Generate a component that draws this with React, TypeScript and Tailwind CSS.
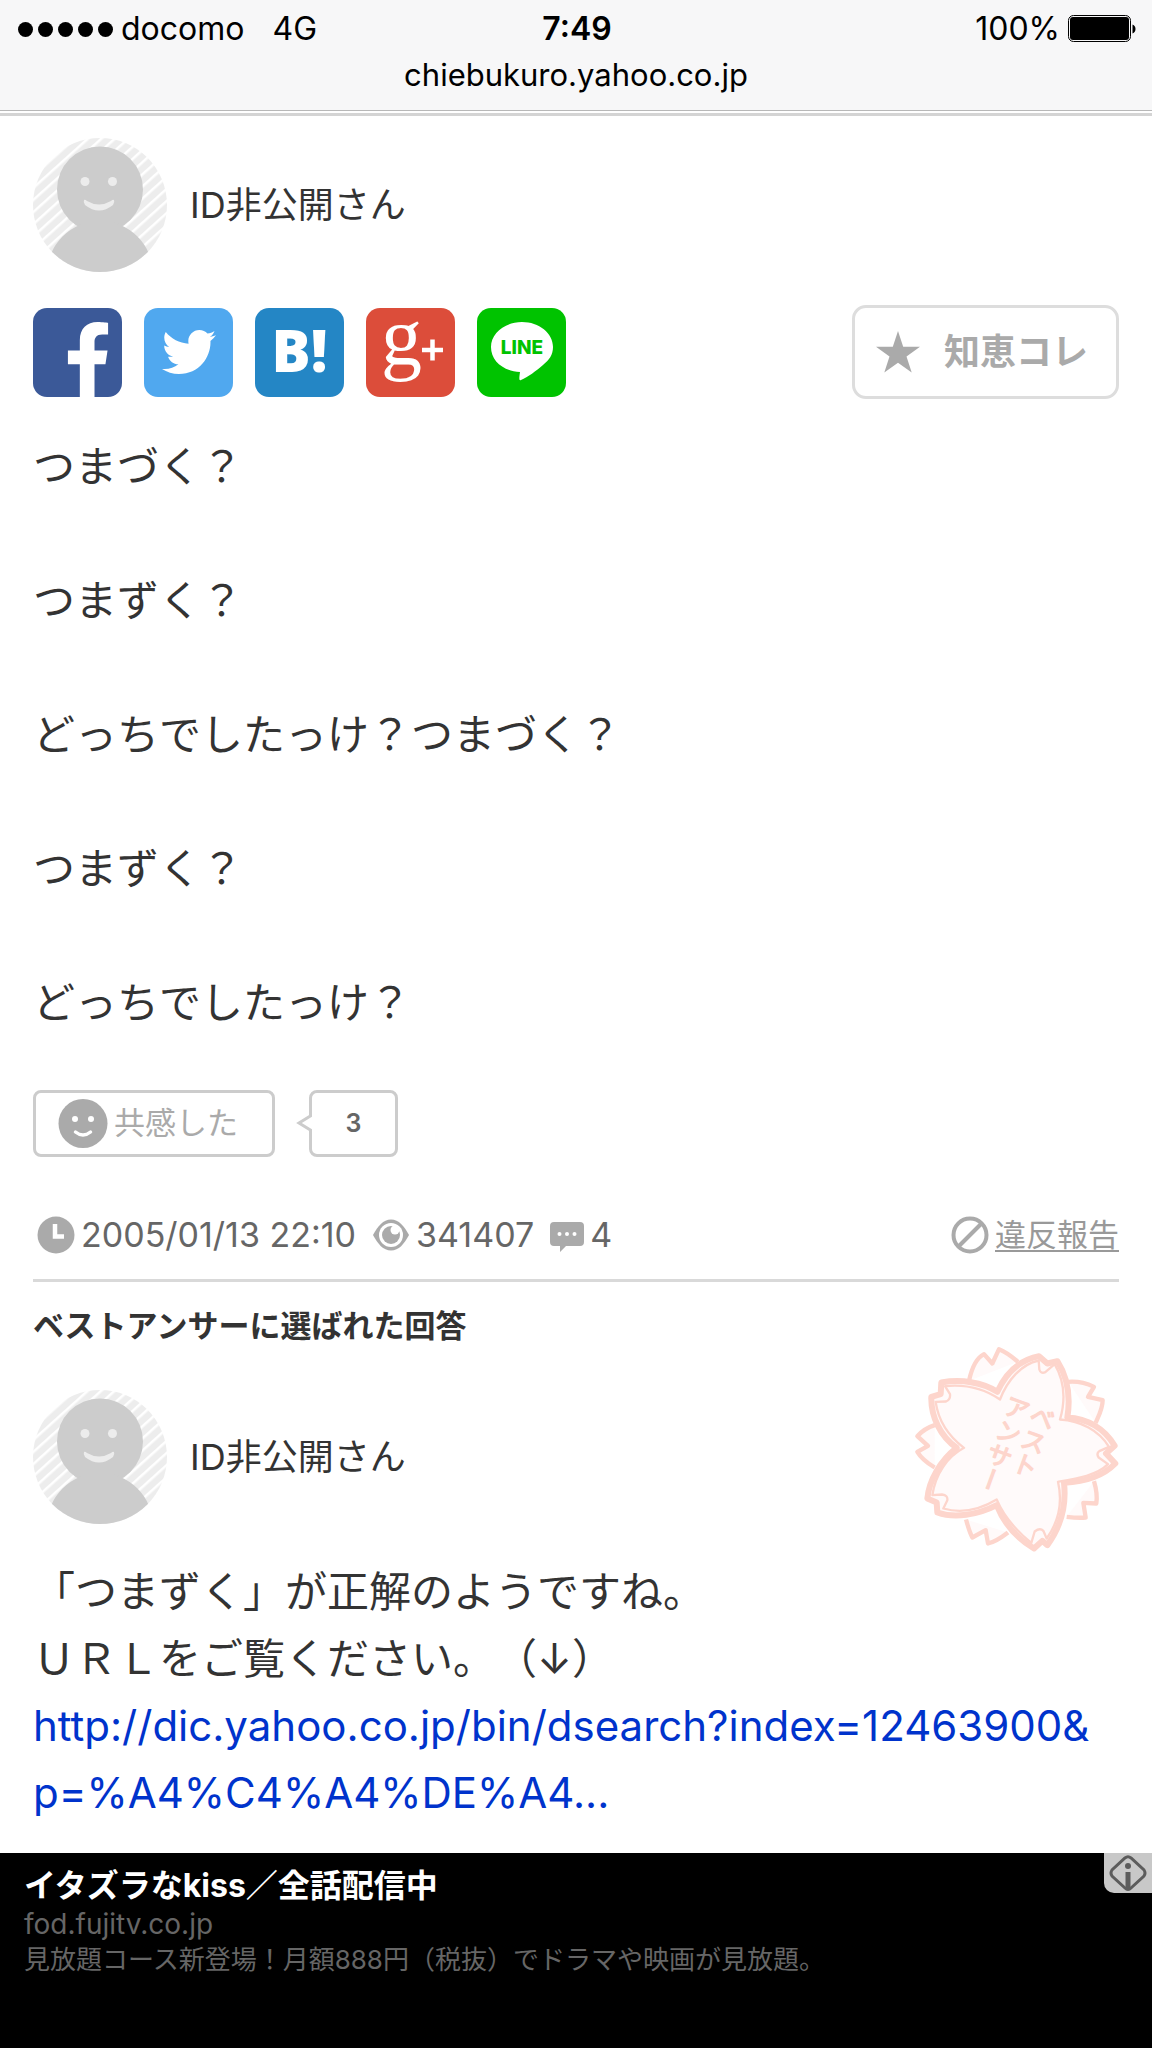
import React from "react";
import { FaFacebookF, FaTwitter } from "react-icons/fa";

const QUESTION = `つまづく？

つまずく？

どっちでしたっけ？つまづく？

つまずく？

どっちでしたっけ？`;

const ANSWER = `「つまずく」が正解のようですね。
ＵＲＬをご覧ください。（↓）`;

const StatusBar: React.FC = () => (
	<header className="bg-[#f7f7f8] text-black">
		<div className="grid grid-cols-[1fr_auto_1fr] items-center pl-[18px] pr-4 pt-2 text-[32px] leading-[42px]">
			<div className="flex items-center">
				<div className="flex gap-[5px] pr-2">
					{[0, 1, 2, 3, 4].map((dot) => (
						<span key={dot} className="size-[15px] rounded-full bg-black" />
					))}
				</div>
				<span>docomo</span>
				<span className="pl-7">4G</span>
			</div>
			<span className="font-semibold">7:49</span>
			<div className="flex items-center justify-end gap-2">
				<span>100%</span>
				<svg className="h-7 w-[68px]" viewBox="0 0 68 28" aria-hidden="true">
					<rect x="0.5" y="0.5" width="62" height="26" rx="5" fill="none" stroke="#000" />
					<rect x="2" y="2" width="59" height="23" rx="3" />
					<path d="M64.500 9.500c4 1 4 8 0 9z" />
				</svg>
			</div>
		</div>
		<div className="pb-[10px] text-center text-[31px] leading-[50px]">
			chiebukuro.yahoo.co.jp
		</div>
		<div className="h-[3px] border-t border-[#b8b8b8] bg-white" />
		<div className="h-[3px] bg-[#d4d4d4]" />
	</header>
);

const Avatar: React.FC<{ id: string }> = ({ id }) => (
	<svg className="size-[134px] shrink-0" viewBox="0 0 134 134" aria-hidden="true">
		<defs>
			<pattern
				id={`${id}-stripes`}
				width="9"
				height="9"
				patternUnits="userSpaceOnUse"
				patternTransform="rotate(48)"
			>
				<rect width="9" height="9" fill="#ededed" />
				<rect width="2.500" height="9" fill="#fff" />
			</pattern>
			<clipPath id={`${id}-clip`}>
				<circle cx="67" cy="67" r="67" />
			</clipPath>
		</defs>
		<g clipPath={`url(#${id}-clip)`}>
			<rect width="134" height="134" fill={`url(#${id}-stripes)`} />
			<circle cx="67" cy="51.500" r="43" fill="#ccc" />
			<circle cx="67" cy="136" r="53" fill="#ccc" />
			<circle cx="52" cy="43.500" r="4.500" fill="#ececec" />
			<circle cx="79.500" cy="43.500" r="4.500" fill="#ececec" />
			<path
				d="M51 62 Q52 61 54 63 Q66 70 78 63 Q80 61 81 62 Q82 64 80 67 Q66 78 52 67 Q50 64 51 62Z"
				fill="#ececec"
			/>
		</g>
	</svg>
);

const UserRow: React.FC<{ id: string }> = ({ id }) => (
	<div className="flex items-center gap-[23px]">
		<Avatar id={id} />
		<span className="text-[36px]">ID非公開さん</span>
	</div>
);

const ShareLinks: React.FC = () => {
	const tile =
		"relative flex size-[89px] items-center justify-center rounded-[14px] text-white";
	return (
		<nav className="flex gap-[22px]" aria-label="シェア">
			<a href="#facebook" aria-label="Facebook" className={`${tile} bg-[#3b5998]`}>
				<FaFacebookF className="absolute bottom-0 left-[31px] h-[75px] w-12" />
			</a>
			<a href="#twitter" aria-label="Twitter" className={`${tile} bg-[#50a8ef]`}>
				<FaTwitter className="size-[54px]" />
			</a>
			<a
				href="#hatena"
				className={`${tile} bg-[#2486c5] pb-1 font-['Open_Sans'] text-[58px] leading-none font-extrabold`}
			>
				B!
			</a>
			<a href="#google-plus" aria-label="Google+" className={`${tile} bg-[#dc4d3a]`}>
				<svg className="size-full overflow-visible" viewBox="0 0 89 89">
					<text
						x="15"
						y="56"
						fontSize="82"
						fill="#fff"
						className="font-['Liberation_Serif',serif]"
					>
						g
					</text>
					<path d="M56 42h21M66.500 31.500v21" stroke="#fff" strokeWidth="4.500" />
				</svg>
			</a>
			<a href="#line" aria-label="LINE" className={`${tile} bg-[#00c300]`}>
				<svg className="size-full" viewBox="0 0 89 89">
					<path
						d="M45 14 C62 14 76 25 76 39 C76 47 72 52 66 57 C59 63 51 69 44 72 C42 73 42 71 43 64 C26 63 14 53 14 39 C14 25 28 14 45 14 Z"
						fill="#fff"
					/>
					<text
						x="45"
						y="46"
						fontSize="19"
						fontWeight="800"
						fill="#00c300"
						textAnchor="middle"
					>
						LINE
					</text>
				</svg>
			</a>
		</nav>
	);
};

const SmileIcon: React.FC = () => (
	<svg className="size-[50px]" viewBox="0 0 50 50" aria-hidden="true">
		<circle cx="25" cy="24.500" r="24.500" fill="#aaa" />
		<circle cx="17" cy="20" r="3" fill="#fff" />
		<circle cx="33" cy="20" r="3" fill="#fff" />
		<path
			d="M17.500 33 Q25 39 32.500 33"
			fill="none"
			stroke="#fff"
			strokeWidth="3.500"
			strokeLinecap="round"
		/>
	</svg>
);

const ClockIcon: React.FC = () => (
	<svg className="size-[38px]" viewBox="0 0 38 38" aria-hidden="true">
		<circle cx="19" cy="19" r="18.500" fill="#aaa" />
		<path d="M18 8v12.500h9" fill="none" stroke="#fff" strokeWidth="4.500" />
	</svg>
);

const EyeIcon: React.FC = () => (
	<svg className="size-[38px]" viewBox="0 0 38 38" aria-hidden="true">
		<path d="M1 19 C6 10 11 3.500 19 3.500 S32 10 37 19 C32 28 27 34.500 19 34.500 S6 28 1 19Z" fill="#aaa" />
		<circle cx="19" cy="19" r="12" fill="#fff" />
		<circle cx="19" cy="19" r="9" fill="#aaa" />
		<circle cx="23" cy="14" r="4.500" fill="#fff" />
	</svg>
);

const CommentIcon: React.FC = () => (
	<svg className="size-[34px]" viewBox="0 0 34 34" aria-hidden="true">
		<path
			d="M4 4h26a4 4 0 0 1 4 4v16a4 4 0 0 1-4 4H16l-6 6v-6H4a4 4 0 0 1-4-4V8a4 4 0 0 1 4-4z"
			fill="#aaa"
		/>
		<g fill="#fff">
			<circle cx="9.500" cy="16" r="2" />
			<circle cx="17" cy="16" r="2" />
			<circle cx="24.500" cy="16" r="2" />
		</g>
	</svg>
);

const BestAnswerStamp: React.FC = () => (
	<svg
		className="absolute -top-[45px] right-0 h-[207px] w-[205px]"
		viewBox="40 495 615 620"
		stroke="#fdd5cc"
		fill="#fffafa"
		strokeLinejoin="round"
		role="img"
		aria-label="ベストアンサー"
	>
		<g strokeWidth="13">
			<path d="M205 602 C213 565 228 533 250 522 L275 550 L295 507 C315 515 335 530 352 545" />
			<path d="M503 605 C530 603 555 608 580 620 L562 650 L606 660 C606 685 595 705 585 728" />
			<path d="M580 903 C588 930 590 950 587 970 L548 968 L555 1012 C535 1014 515 1012 498 1010" />
			<path d="M196 1018 C201 1035 206 1055 215 1072 L255 1050 L262 1090 C285 1085 305 1070 322 1057" />
			<path d="M102 735 C80 742 62 755 50 768 L82 797 L50 815 C62 835 82 850 102 862" />
		</g>
		<path
			strokeWidth="18"
			d="M290 635 C315 580 355 540 415 528 L440 550 L470 543 C500 590 510 650 500 712 C560 715 612 745 642 797 L616 820 L644 850 C605 890 550 905 490 908 C498 980 480 1040 440 1095 L425 1082 L400 1105 C350 1075 310 1030 288 975 C230 1005 160 1015 110 997 L108 967 L80 955 C85 900 120 840 168 803 C120 770 90 710 92 650 L120 642 L122 607 C180 597 245 605 290 635 Z"
		/>
		<path
			strokeWidth="7"
			d="M298 658 C320 600 362 552 414 541 L416 568 Q420 582 434 576 L462 552 C490 600 495 660 478 718 C540 722 595 750 625 800 L596 813 Q586 820 594 832 L622 852 C590 885 530 895 472 905 C487 970 470 1030 438 1075 L428 1052 Q418 1042 402 1054 L392 1088 C345 1050 310 1010 288 958 C235 990 180 1000 128 985 L140 960 Q142 945 124 943 L95 945 C105 880 140 830 190 803 C140 765 112 715 105 665 L136 664 Q150 658 148 642 L133 618 C190 612 250 625 298 658Z"
		/>
		<g
			stroke="#fdd5cc"
			strokeWidth="4"
			fill="#fdd5cc"
			fontSize="76"
			transform="rotate(20 345 805)"
			className="[writing-mode:vertical-rl]"
		>
			<text x="384" y="652">
				ベスト
			</text>
			<text x="303" y="652">
				アンサー
			</text>
		</g>
	</svg>
);

const AdBanner: React.FC = () => (
	<footer className="relative flex-1 bg-black px-6 pt-[13px] text-[26px] leading-9 text-[#666]">
		<p className="text-[32px] leading-10 font-bold text-white">
			イタズラなkiss／全話配信中
		</p>
		<p className="text-[28px]">fod.fujitv.co.jp</p>
		<p>見放題コース新登場！月額888円（税抜）でドラマや映画が見放題。</p>
		<button
			type="button"
			aria-label="広告情報"
			className="absolute top-0 right-0 flex h-10 w-12 items-center justify-center rounded-bl-[10px] bg-[#c8c8c8]"
		>
			<svg className="h-[38px] w-10" viewBox="0 0 40 38">
				<path
					d="M17 4 Q20 1.500 23 4 L36 16 Q38 19 36 22 L23 34 Q20 37 17 34 L4 22 Q2 19 4 16 Z"
					fill="none"
					stroke="#5c5c5c"
					strokeWidth="3"
				/>
				<circle cx="20" cy="12" r="3" fill="#5c5c5c" />
				<path d="M20 18v17" stroke="#5c5c5c" strokeWidth="5" />
			</svg>
		</button>
	</footer>
);

const App: React.FC = () => {
	return (
		<div
			lang="ja"
			className="flex min-h-screen flex-col bg-white font-['Inter','Noto_Sans_CJK_JP',sans-serif] text-[#333] [text-spacing-trim:space-all]"
		>
			<StatusBar />

			<main className="px-[33px] pt-[22px] pb-[27px]">
				<article>
					<UserRow id="asker" />

					<div className="mt-[33px] flex items-center justify-between">
						<ShareLinks />
						<button
							type="button"
							className="flex h-[94px] w-[267px] items-center gap-6 rounded-[14px] border-[3px] border-[#ddd] pl-[21px] text-[36px] font-bold text-[#aaa]"
						>
							<svg className="size-11" viewBox="0 0 44 42" fill="#aaa" aria-hidden="true">
								<path d="M22 0 L27.200 15.800 H44 L30.500 25.500 L35.700 41.500 L22 31.800 L8.300 41.500 L13.500 25.500 L0 15.800 H16.800 Z" />
							</svg>
							知恵コレ
						</button>
					</div>

					<p className="mt-[34px] text-[42px] leading-[67px] whitespace-pre-line">
						{QUESTION}
					</p>

					<div className="mt-[54px] flex gap-[34px]">
						<button
							type="button"
							className="flex h-[67px] w-[242px] items-center gap-[6px] rounded-lg border-[3px] border-[#ccc] pl-[22px] text-[31px] text-[#aaa]"
						>
							<SmileIcon />
							共感した
						</button>
						<div className="relative flex h-[67px] w-[89px] items-center justify-center rounded-lg border-[3px] border-[#ccc] text-[25px] font-semibold text-[#666]">
							<svg
								className="absolute top-[21px] -left-4 h-[18px] w-4"
								viewBox="0 0 16 18"
								aria-hidden="true"
							>
								<path d="M16 1 L3 9 L16 17" fill="#fff" stroke="#ccc" strokeWidth="3" />
							</svg>
							3
						</div>
					</div>

					<div className="mt-[54px] flex items-center justify-between border-b-[3px] border-[#d9d9d9] pb-5 text-[34px] leading-[48px] text-[#666]">
						<div className="flex items-center gap-4 pl-1">
							<span className="flex items-center gap-[6px]">
								<ClockIcon />
								2005/01/13 22:10
							</span>
							<span className="flex items-center gap-[6px]">
								<EyeIcon />
								341407
							</span>
							<span className="flex items-center gap-[6px]">
								<CommentIcon />4
							</span>
						</div>
						<a href="#report" className="flex items-center gap-[6px] text-[31px] text-[#999]">
							<svg className="size-[38px]" viewBox="0 0 38 38" aria-hidden="true">
								<g fill="none" stroke="#aaa" strokeWidth="4">
									<circle cx="19" cy="19" r="16.500" />
									<path d="M8 30 L30 8" />
								</g>
							</svg>
							<span className="underline decoration-2 underline-offset-4">違反報告</span>
						</a>
					</div>
				</article>

				<article>
					<h2 className="mt-[22px] text-[31px] leading-[44px] font-bold">
						ベストアンサーに選ばれた回答
					</h2>
					<div className="relative mt-[42px]">
						<UserRow id="answerer" />
						<BestAnswerStamp />
					</div>
					<div className="mt-[34px] text-[42px] leading-[67px]">
						<p className="whitespace-pre-line">{ANSWER}</p>
						<a
							href="http://dic.yahoo.co.jp/bin/dsearch"
							className="text-[#0033cc]"
						>
							http://dic.yahoo.co.jp/bin/dsearch?index=12463900&amp;
							<wbr />
							p=%A4%C4%A4%DE%A4...
						</a>
					</div>
				</article>
			</main>

			<AdBanner />
		</div>
	);
};

export default App;
